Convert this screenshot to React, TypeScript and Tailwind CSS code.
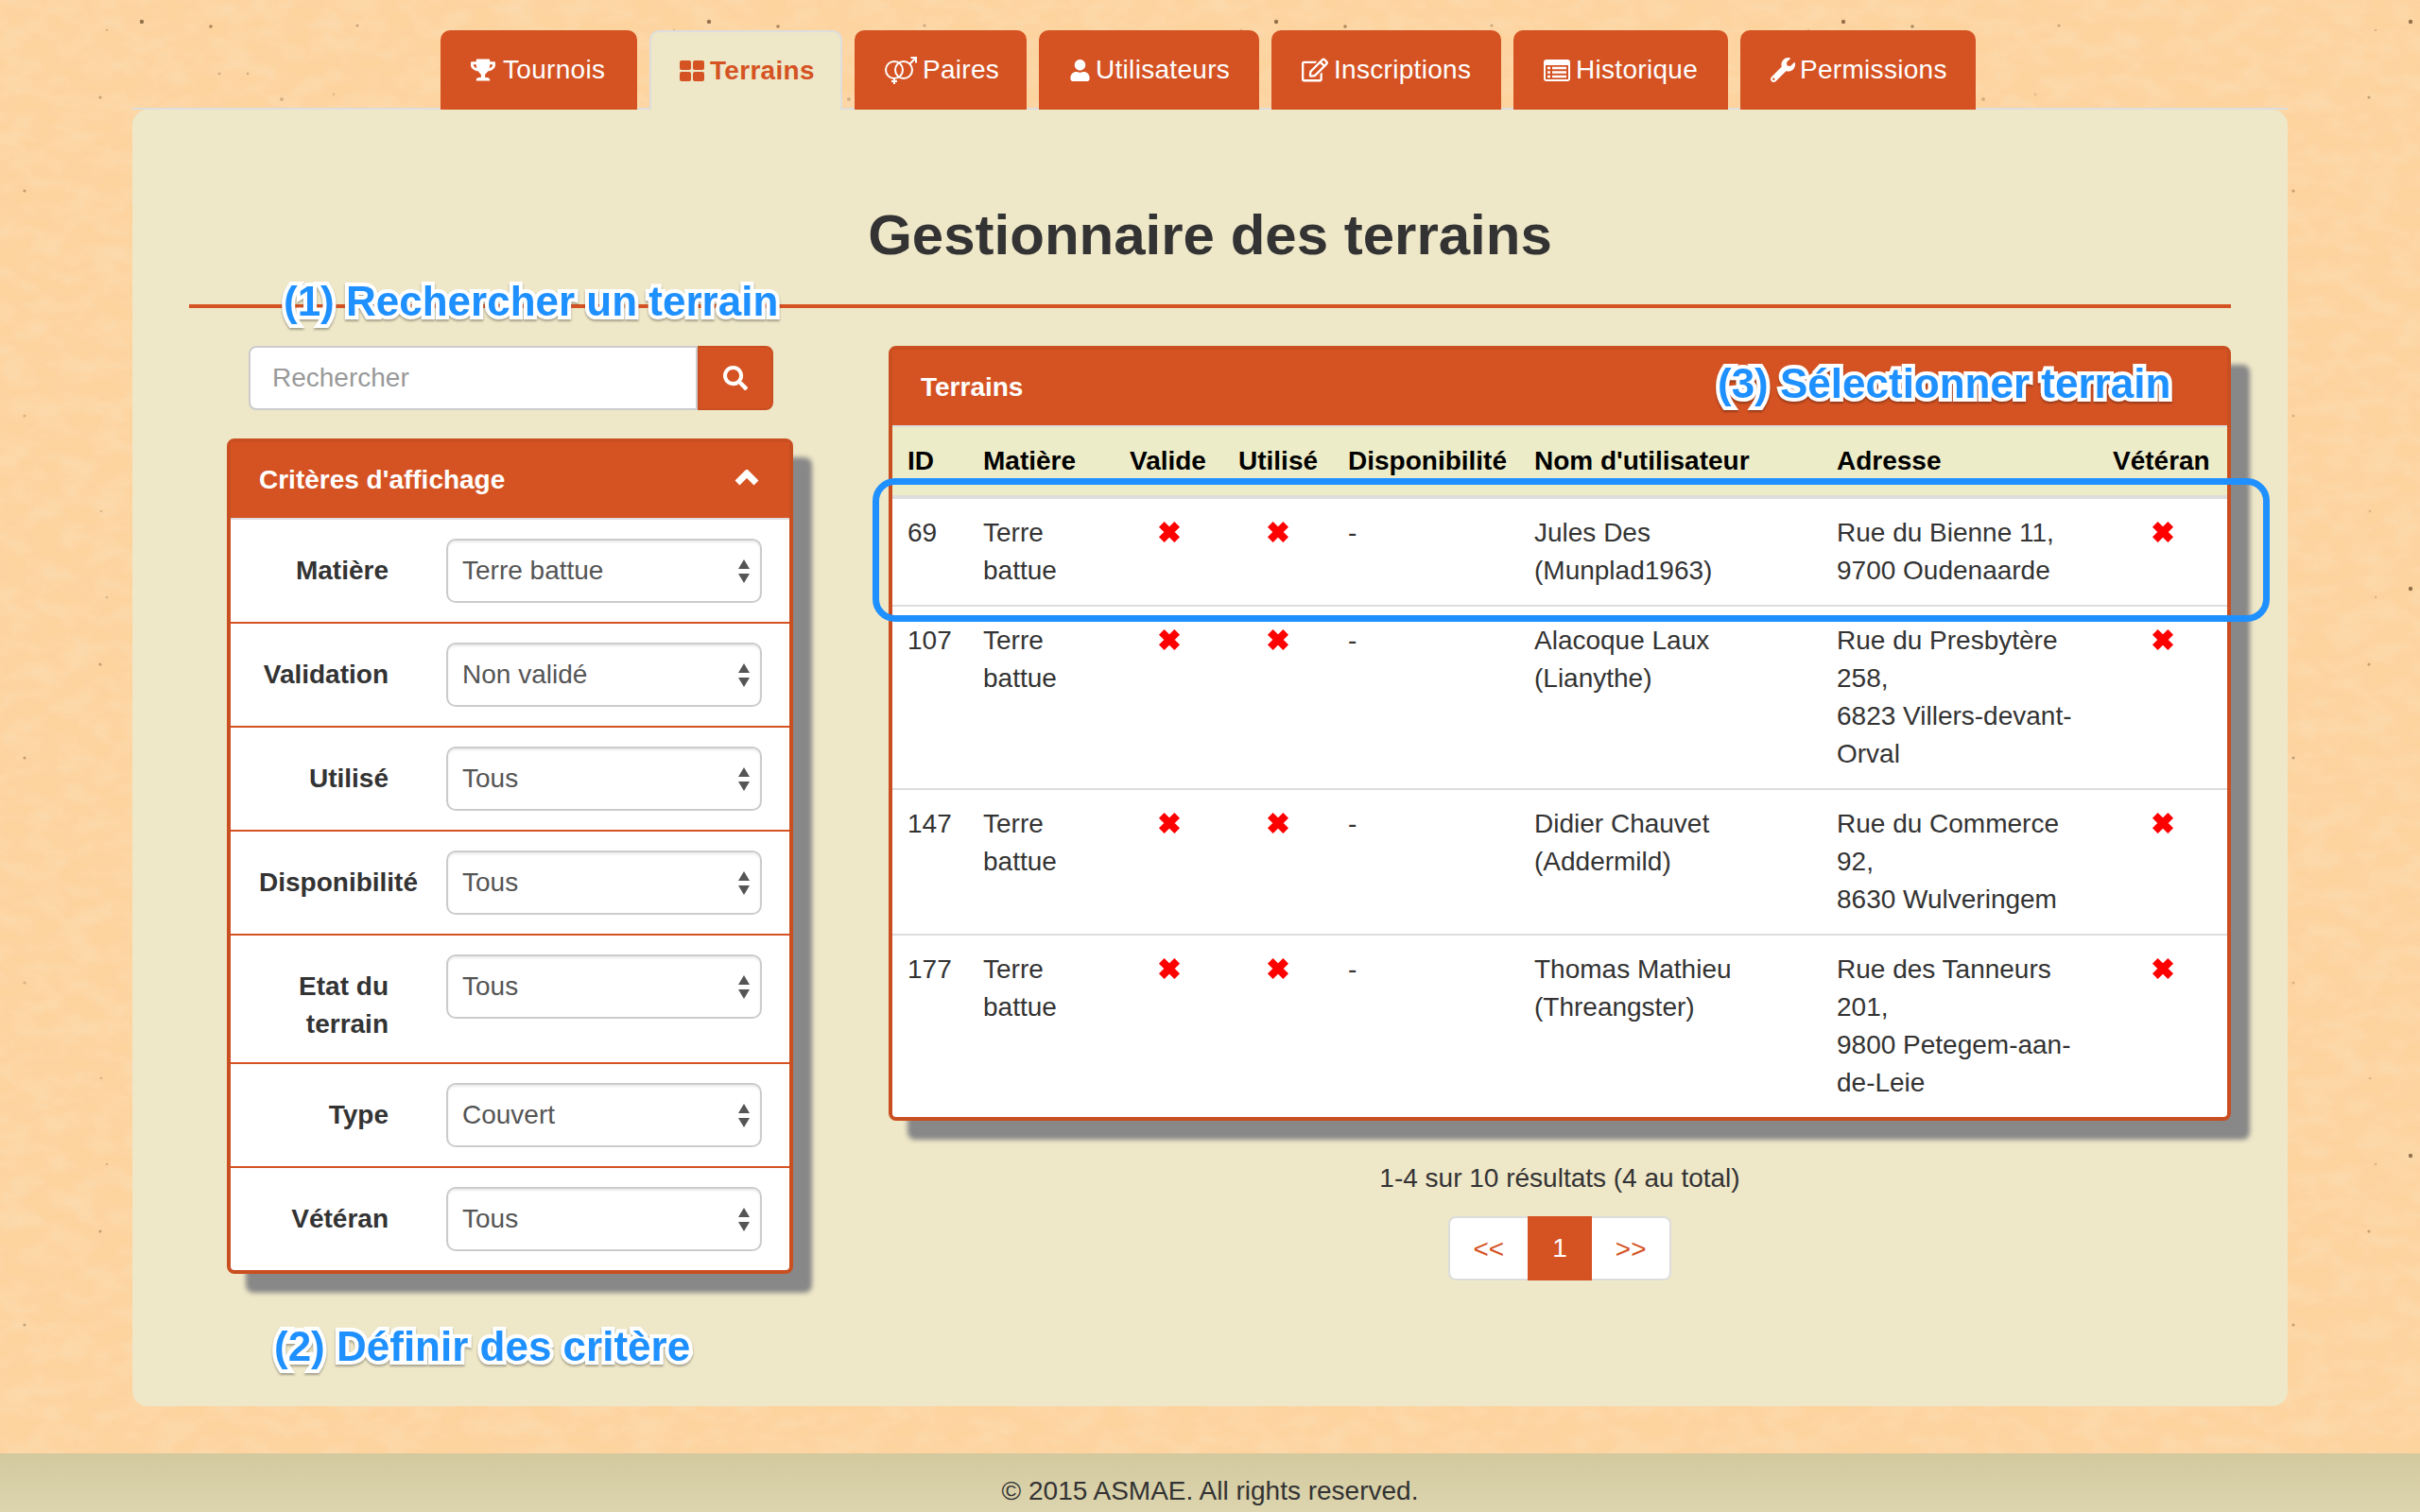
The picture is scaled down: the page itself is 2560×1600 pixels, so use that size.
import type { ReactNode } from "react";
import { FaRegEdit, FaSearch, FaTrophy, FaUser, FaWrench } from "react-icons/fa";

function GridIcon() {
  return (
    <svg width="26" height="22" viewBox="0 0 26 22" fill="currentColor" aria-hidden="true">
      <rect width="12" height="10" rx="2" />
      <rect x="14" width="12" height="10" rx="2" />
      <rect y="12" width="12" height="10" rx="2" />
      <rect x="14" y="12" width="12" height="10" rx="2" />
    </svg>
  );
}

function VenusMarsIcon() {
  return (
    <svg width="34" height="29" viewBox="0 0 34 29" fill="none" stroke="currentColor" strokeWidth="2" aria-hidden="true">
      <circle cx="10" cy="14" r="9" />
      <circle cx="20" cy="14" r="9" />
      <path d="M10 23 V29 M7 26 H13 M26.5 7.5 L33 1 M27.5 1 H33 V6.5" />
    </svg>
  );
}

function ListAltIcon() {
  return (
    <svg width="28" height="23" viewBox="0 0 28 23" aria-hidden="true">
      <rect width="28" height="23" rx="3" fill="currentColor" />
      <rect x="2" y="6" width="24" height="15" fill="#d55323" />
      <path d="M4 9 H7 M4 13.5 H7 M4 18 H7 M9 9 H24 M9 13.5 H24 M9 18 H24" stroke="currentColor" strokeWidth="2.4" />
    </svg>
  );
}

const tabs = [
  { label: "Tournois", icon: <FaTrophy size={26} />, width: "w-[208px]", iconBox: "w-[34px]" },
  { label: "Terrains", icon: <GridIcon />, width: "w-[204px]", iconBox: "w-[32px]", active: true },
  { label: "Paires", icon: <VenusMarsIcon />, width: "w-[182px]", iconBox: "w-[40px]" },
  { label: "Utilisateurs", icon: <FaUser size={23} />, width: "w-[233px]", iconBox: "w-[28px]" },
  { label: "Inscriptions", icon: <FaRegEdit size={28} />, width: "w-[243px]", iconBox: "w-[34px]" },
  { label: "Historique", icon: <ListAltIcon />, width: "w-[227px]", iconBox: "w-[34px]" },
  { label: "Permissions", icon: <FaWrench size={26} />, width: "w-[249px]", iconBox: "w-[31px]" },
];

const filters = [
  { label: "Matière", value: "Terre battue" },
  { label: "Validation", value: "Non validé" },
  { label: "Utilisé", value: "Tous" },
  { label: "Disponibilité", value: "Tous" },
  { label: "Etat du terrain", value: "Tous" },
  { label: "Type", value: "Couvert" },
  { label: "Vétéran", value: "Tous" },
];

const rows = [
  {
    id: "69",
    user: ["Jules Des", "(Munplad1963)"],
    address: ["Rue du Bienne 11,", "9700 Oudenaarde"],
  },
  {
    id: "107",
    user: ["Alacoque Laux", "(Lianythe)"],
    address: ["Rue du Presbytère", "258,", "6823 Villers-devant-", "Orval"],
  },
  {
    id: "147",
    user: ["Didier Chauvet", "(Addermild)"],
    address: ["Rue du Commerce", "92,", "8630 Wulveringem"],
  },
  {
    id: "177",
    user: ["Thomas Mathieu", "(Threangster)"],
    address: ["Rue des Tanneurs", "201,", "9800 Petegem-aan-", "de-Leie"],
  },
];

const specks = [
  [150, 23, 2.2, 0.65],
  [223, 28, 1.8, 0.5],
  [378, 27, 1.6, 0.3],
  [113, 32, 1.3, 0.22],
  [232, 78, 1.6, 0.25],
  [262, 78, 1.4, 0.25],
  [106, 103, 1.6, 0.35],
  [298, 105, 2, 0.25],
  [353, 100, 1.4, 0.15],
  [26, 202, 1.6, 0.35],
  [26, 440, 1.6, 0.22],
  [107, 541, 1.3, 0.22],
  [480, 260, 1.6, 0.2],
  [540, 390, 1.4, 0.2],
  [330, 480, 1.3, 0.18],
];

function PaperTexture() {
  return (
    <svg className="absolute inset-0 h-full w-full" aria-hidden="true">
      <defs>
        <pattern id="specks" width="600" height="600" patternUnits="userSpaceOnUse">
          {specks.map(([x, y, r, o]) => (
            <circle key={`${x}-${y}`} cx={x} cy={y} r={r} fill="#5a3a1a" opacity={o} />
          ))}
        </pattern>
        <filter id="paper">
          <feTurbulence type="fractalNoise" baseFrequency="0.03 0.05" numOctaves="4" seed="7" />
          <feColorMatrix values="0 0 0 0 0.96  0 0 0 0 0.75  0 0 0 0 0.5  1.6 0 0 0 -0.55" />
        </filter>
      </defs>
      <rect width="100%" height="100%" filter="url(#paper)" opacity="0.6" />
      <rect width="100%" height="100%" fill="url(#specks)" />
    </svg>
  );
}

function Note({ className, children }: { className: string; children: ReactNode }) {
  return (
    <div
      className={`absolute z-20 whitespace-nowrap text-[44px] leading-[52px] font-bold text-[#1e90ff] [-webkit-text-stroke:8px_white] [paint-order:stroke_fill] [filter:drop-shadow(0_2px_1px_rgba(0,0,0,0.3))] ${className}`}
    >
      {children}
    </div>
  );
}

function Cross() {
  return (
    <svg width="24" height="24" viewBox="0 0 24 24" className="mx-auto -mt-[2px]" aria-hidden="true">
      <path d="M3.8 3.8 L20.2 20.2 M20.2 3.8 L3.8 20.2" stroke="#ff0000" strokeWidth="8" fill="none" />
    </svg>
  );
}

function Filter({ label, value }: { label: string; value: string }) {
  return (
    <div className="flex border-b-2 border-[#d55323] py-5 last:border-b-0">
      <label className="ml-[30px] w-[137px] shrink-0 pt-[14px] text-right font-bold text-[#333]">
        {label}
      </label>
      <div className="relative ml-[61px] h-[68px] w-[334px]">
        <select
          defaultValue={value}
          className="h-full w-full appearance-none rounded-[10px] border-2 border-[#ccc] bg-white pl-[15px] text-[#555] shadow-[inset_0_2px_2px_rgba(0,0,0,0.075)]"
        >
          <option>{value}</option>
        </select>
        <svg
          width="12"
          height="25"
          viewBox="0 0 12 25"
          className="pointer-events-none absolute top-[22px] right-[13px]"
          aria-hidden="true"
        >
          <path d="M6 0 L12 10 L0 10 Z M0 15 L12 15 L6 25 Z" fill="#555" />
        </svg>
      </div>
    </div>
  );
}

function FilterPanel() {
  return (
    <div className="w-[599px] rounded-[8px] border-4 border-[#c94e20] bg-white shadow-[20px_20px_5px_#888]">
      <div className="flex h-[80px] items-center justify-between bg-[#d55323] pr-[32px] pl-[30px] font-bold text-white">
        <h3>Critères d'affichage</h3>
        <svg width="26" height="17" viewBox="0 0 26 17" className="-mt-[6px]" aria-hidden="true">
          <path d="M3 14 L13 4 L23 14" stroke="white" strokeWidth="7" fill="none" />
        </svg>
      </div>
      <div className="border-t-2 border-[#ddd]">
        {filters.map((f) => (
          <Filter key={f.label} label={f.label} value={f.value} />
        ))}
      </div>
    </div>
  );
}

function TerrainTable() {
  return (
    <div className="relative rounded-[8px] border-4 border-[#c94e20] bg-white shadow-[20px_20px_5px_#888]">
      <div className="relative flex h-[80px] items-center bg-[#d55323] pl-[30px] font-bold text-white">
        Terrains
        <Note className="top-[10px] left-[873px]">(3) Sélectionner terrain</Note>
      </div>
      <table className="w-full table-fixed border-collapse text-left text-[#333]">
        <colgroup>
          <col className="w-[80px]" />
          <col className="w-[155px]" />
          <col className="w-[115px]" />
          <col className="w-[116px]" />
          <col className="w-[197px]" />
          <col className="w-[320px]" />
          <col className="w-[292px]" />
          <col />
        </colgroup>
        <thead>
          <tr className="border-t-2 border-b-4 border-[#ddd] bg-[#edecc8] text-black">
            <th className="px-4 py-4 font-bold">ID</th>
            <th className="px-4 py-4 font-bold">Matière</th>
            <th className="px-4 py-4 font-bold whitespace-nowrap">Valide</th>
            <th className="px-4 py-4 font-bold whitespace-nowrap">Utilisé</th>
            <th className="px-4 py-4 font-bold whitespace-nowrap">Disponibilité</th>
            <th className="px-4 py-4 font-bold whitespace-nowrap">Nom d'utilisateur</th>
            <th className="px-4 py-4 font-bold">Adresse</th>
            <th className="px-4 py-4 font-bold whitespace-nowrap">Vétéran</th>
          </tr>
        </thead>
        <tbody>
          {rows.map((row) => (
            <tr key={row.id} className="border-b-2 border-[#ddd] align-top last:border-b-0">
              <td className="px-4 py-4">{row.id}</td>
              <td className="px-4 py-4">
                Terre
                <br />
                battue
              </td>
              <td className="px-4 py-[25px]">
                <Cross />
              </td>
              <td className="px-4 py-[25px]">
                <Cross />
              </td>
              <td className="px-4 py-4">-</td>
              <td className="px-4 py-4">
                {row.user.map((line) => (
                  <div key={line}>{line}</div>
                ))}
              </td>
              <td className="px-4 py-4">
                {row.address.map((line) => (
                  <div key={line} className="whitespace-nowrap">
                    {line}
                  </div>
                ))}
              </td>
              <td className="px-4 py-[25px]">
                <Cross />
              </td>
            </tr>
          ))}
        </tbody>
      </table>
      {/* blue highlight drawn over the first row */}
      <div className="pointer-events-none absolute top-[136px] -left-[21px] h-[152px] w-[1478px] rounded-[24px] border-[7px] border-[#1e90ff]" />
    </div>
  );
}

function Pagination() {
  return (
    <div className="mt-[20px] flex h-[68px] text-[#d55323]">
      <a className="flex items-center rounded-l-[8px] border-2 border-r-0 border-[#ddd] bg-white px-[25px] pt-[2px]">
        &lt;&lt;
      </a>
      <a className="flex items-center bg-[#d55323] px-[26px] text-white">1</a>
      <a className="flex items-center rounded-r-[8px] border-2 border-l-0 border-[#ddd] bg-white px-[25px] pt-[2px]">
        &gt;&gt;
      </a>
    </div>
  );
}

export default function App() {
  return (
    <div className="relative flex h-[1600px] flex-col overflow-hidden bg-[#fdd39e] font-['Liberation_Sans',Arial,sans-serif] text-[28px] leading-[40px] text-[#333]">
      <PaperTexture />

      <div className="relative mx-[140px] mt-[32px] flex-1">
        {/* Tabs */}
        <nav className="flex h-[84px] gap-[13px] border-b-2 border-[#ddd] pl-[326px] tracking-[0.3px]">
          {tabs.map((tab) => (
            <a
              key={tab.label}
              className={
                tab.active
                  ? `z-10 flex h-[84px] shrink-0 items-center rounded-t-[10px] border-2 border-b-0 border-[#ddd] bg-[#eee7c8] pl-[30px] font-bold text-[#d55323] ${tab.width}`
                  : `z-10 flex h-[84px] shrink-0 items-center rounded-t-[10px] bg-[#d55323] pl-[32px] text-white ${tab.width}`
              }
            >
              <span className={`shrink-0 ${tab.iconBox}`}>{tab.icon}</span>
              {tab.label}
            </a>
          ))}
        </nav>

        {/* Main panel */}
        <main className="relative h-[1372px] rounded-[16px] bg-[#eee7c8] px-[60px]">
          <h1 className="pt-[100px] text-center text-[60px] leading-[66px] font-bold text-[#333]">
            Gestionnaire des terrains
          </h1>
          <hr className="mt-[40px] border-t-4 border-[#d55323]" />
          <Note className="top-[177px] left-[160px]">(1) Rechercher un terrain</Note>

          <div className="mt-[40px] flex">
            <div className="ml-[40px] w-[599px] shrink-0">
              <div className="ml-[23px] flex h-[68px] w-[555px]">
                <input
                  placeholder="Rechercher"
                  className="min-w-0 flex-1 rounded-l-[8px] border-2 border-[#ccc] bg-white px-[23px] placeholder:text-[#999]"
                />
                <button className="flex w-[80px] items-center justify-center rounded-r-[8px] border-2 border-[#c94e20] bg-[#d55323] text-white">
                  <FaSearch size={26} />
                </button>
              </div>
              <div className="mt-[30px]">
                <FilterPanel />
              </div>
            </div>

            <div className="ml-[101px] flex-1">
              <TerrainTable />
              <div className="mt-[41px] flex flex-col items-center">
                <p>1-4 sur 10 résultats (4 au total)</p>
                <Pagination />
              </div>
            </div>
          </div>
          <Note className="top-[1283px] left-[150px]">(2) Définir des critère</Note>
        </main>
      </div>

      <footer className="relative h-[62px] bg-gradient-to-b from-[#d2c99f] to-[#ddd5ae] pt-[20px] text-center">
        © 2015 ASMAE. All rights reserved.
      </footer>
    </div>
  );
}
